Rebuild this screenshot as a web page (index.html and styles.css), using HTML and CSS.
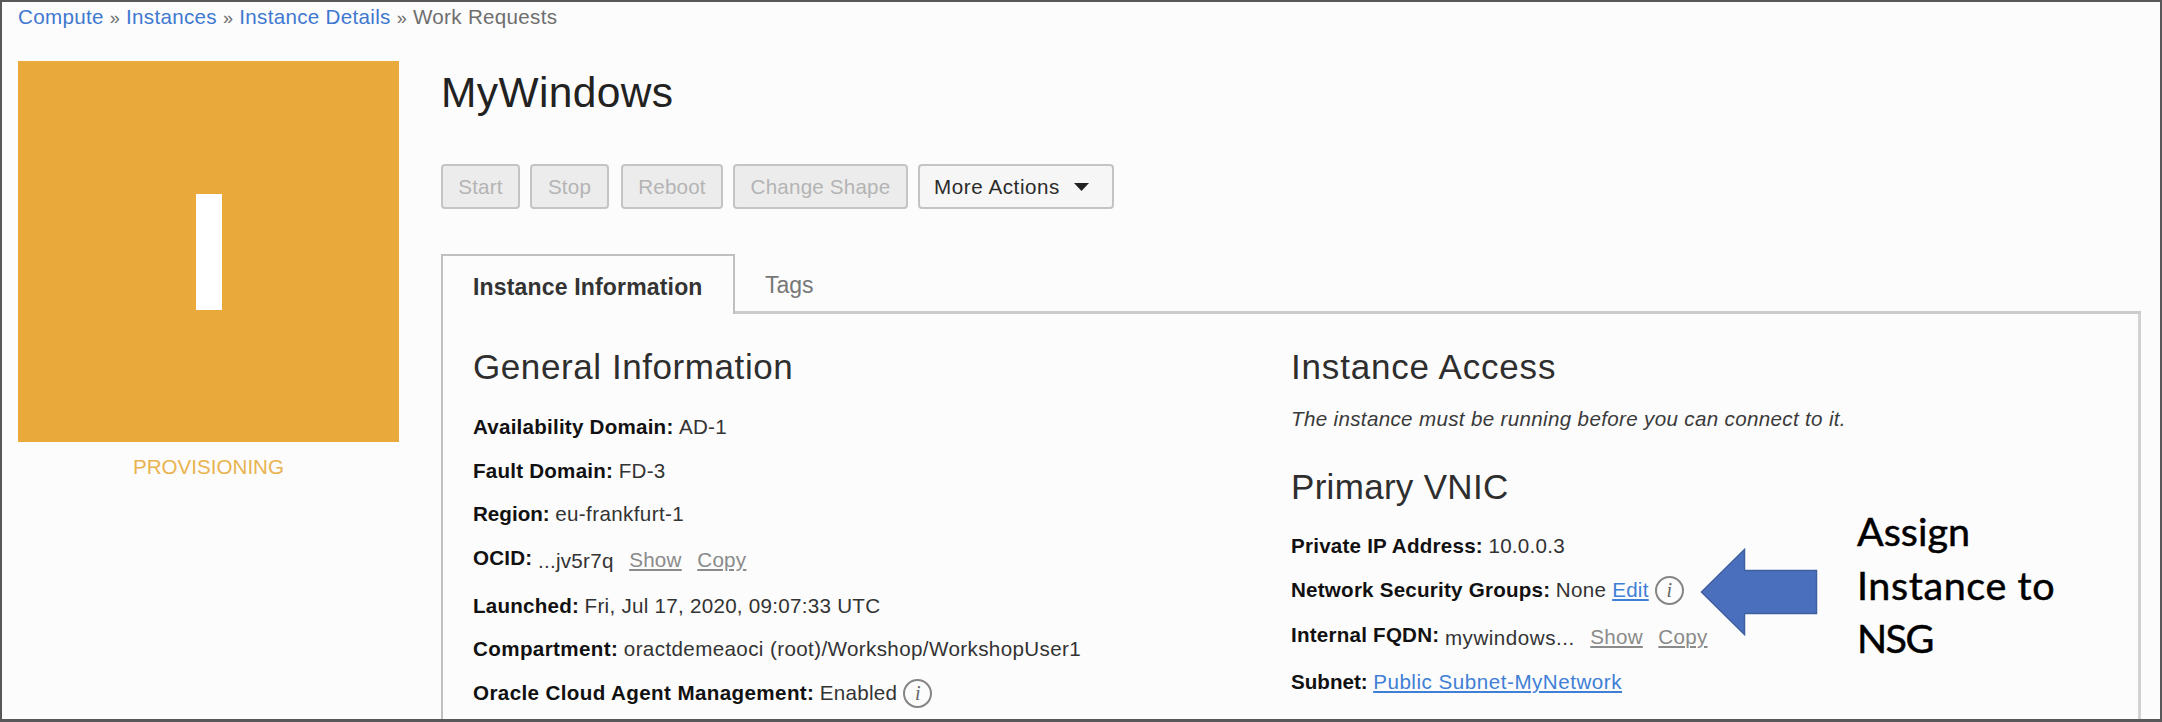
FILE: index.html
```html
<!DOCTYPE html>
<html lang="en">
<head>
<meta charset="utf-8">
<title>MyWindows - Instance Details</title>
<link rel="stylesheet" href="styles.css">
</head>
<body>
<div class="page">
  <nav class="breadcrumb"><a href="#">Compute</a> <span class="sep">»</span> <a href="#">Instances</a> <span class="sep">»</span> <a href="#">Instance Details</a> <span class="sep">»</span> <span>Work Requests</span></nav>
  <div class="layout">
    <aside class="status">
      <div class="tile"><div class="tile-bar"></div></div>
      <div class="status-label">PROVISIONING</div>
    </aside>
    <main class="main">
      <h1 class="title">MyWindows</h1>
      <div class="actions">
        <button class="btn start" disabled>Start</button>
        <button class="btn stop" disabled>Stop</button>
        <button class="btn reboot" disabled>Reboot</button>
        <button class="btn shape" disabled>Change Shape</button>
        <button class="btn more">More Actions<svg class="caret" viewBox="0 0 15 8"><path d="M0 0H15L7.5 8Z"/></svg></button>
      </div>
      <div class="tabs">
        <div class="tab active">Instance Information</div>
        <div class="tab">Tags</div>
      </div>
      <div class="panel">
        <section class="col general">
          <h2>General Information</h2>
          <div class="row"><b>Availability Domain:</b><span>AD-1</span></div>
          <div class="row"><b>Fault Domain:</b><span>FD-3</span></div>
          <div class="row"><b class="snug">Region:</b><span class="roomy">eu-frankfurt-1</span></div>
          <div class="row tall"><b>OCID:</b><span class="low">...jv5r7q</span><a class="mini" href="#">Show</a><a class="mini" href="#">Copy</a></div>
          <div class="row"><b>Launched:</b><span>Fri, Jul 17, 2020, 09:07:33 UTC</span></div>
          <div class="row"><b class="roomy">Compartment:</b><span class="roomy">oractdemeaoci (root)/Workshop/WorkshopUser1</span></div>
          <div class="row"><b class="roomy">Oracle Cloud Agent Management:</b><span>Enabled</span><i class="info">i</i></div>
        </section>
        <section class="col access">
          <h2 class="wide">Instance Access</h2>
          <p class="note">The instance must be running before you can connect to it.</p>
          <h2 class="vnic">Primary VNIC</h2>
          <div class="row"><b>Private IP Address:</b><span>10.0.0.3</span></div>
          <div class="row"><b>Network Security Groups:</b><span>None</span><a class="link" href="#">Edit</a><i class="info">i</i></div>
          <div class="row fqdn"><b>Internal FQDN:</b><span class="low looser">mywindows...</span><a class="mini" href="#">Show</a><a class="mini" href="#">Copy</a></div>
          <div class="row"><b class="snug">Subnet:</b><a class="link looser" href="#">Public Subnet-MyNetwork</a></div>
        </section>
      </div>
    </main>
  </div>
  <svg class="arrow" viewBox="0 0 118 88"><path d="M1.500 44L44.500 1.500V22.500H116.500V65.500H44.500V86.500Z"/></svg>
  <div class="callout"><div>Assign</div><div class="line-wide">Instance to</div><div class="line-narrow">NSG</div></div>
</div>
</body>
</html>
```
FILE: styles.css
```css
* { box-sizing: border-box; }
body { margin: 0; font-family: "Liberation Sans", Arial, sans-serif; font-size: 20.6px; color: #333; }
.page { position: relative; width: 2162px; height: 722px; overflow: hidden; background: #fcfcfc; border: 2px solid #58585a; border-bottom-width: 3px; padding: 0 0 0 16px; }
.breadcrumb { height: 59px; line-height: 30px; letter-spacing: 0.3px; color: #6e6e6e; white-space: nowrap; }
.breadcrumb a { color: #3f78d0; text-decoration: none; }
.sep { font-size: 18px; }
.layout { display: flex; }
.status { width: 381px; flex: none; }
.tile { height: 381px; background: #eaa93b; display: flex; align-items: center; justify-content: center; }
.tile-bar { width: 26px; height: 116px; background: #fff; }
.status-label { margin-top: 13px; line-height: 24px; text-align: center; color: #e9b34f; }
.main { margin-left: 42px; width: 1700px; flex: none; }
.title { margin: 0; height: 103px; line-height: 63px; font-size: 42.5px; font-weight: 400; letter-spacing: 0.38px; color: #222; }
.actions { display: flex; height: 45px; }
.btn { font: inherit; height: 45px; padding: 0; border: 2px solid #c4c4c4; border-radius: 4px; background: #ececec; color: #b4b4b4; letter-spacing: 0.2px; }
.start { width: 79px; margin-right: 10px; }
.stop { width: 79px; margin-right: 12px; }
.reboot { width: 102px; margin-right: 10px; }
.shape { width: 175px; margin-right: 10px; }
.more { display: flex; align-items: center; width: 196px; padding-left: 14px; background: #f6f6f6; color: #2b2b2b; letter-spacing: 0.58px; white-space: nowrap; }
.caret { width: 15px; height: 8px; margin-left: 14px; fill: #222; }
.tabs { display: flex; margin-top: 45px; height: 60px; }
.tab { flex: 1; padding: 0 30px; line-height: 62px; font-size: 23px; color: #777; border-bottom: 3px solid #ccc; }
.tab.active { flex: none; width: 294px; padding: 0 0 0 30px; font-weight: 700; letter-spacing: 0.17px; color: #333; border: 2px solid #c0c0c0; border-bottom: 0; white-space: nowrap; }
.panel { display: flex; height: 420px; border: 3px solid #d2d2d2; border-left: 2px solid #c0c0c0; border-top: 0; padding-left: 30px; }
.col { flex: none; }
.general { width: 818px; }
h2 { margin: 0; height: 91px; line-height: 106px; font-size: 35px; font-weight: 400; letter-spacing: 0.58px; color: #2e2e2e; }
h2.wide { letter-spacing: 0.82px; }
.row { display: flex; height: 43.6px; line-height: 43.6px; letter-spacing: 0.27px; white-space: nowrap; }
.row b { margin-right: 5.5px; color: #111; letter-spacing: 0.22px; }
.row .roomy { letter-spacing: 0.38px; }
.row .looser { letter-spacing: 0.52px; }
.row .snug { letter-spacing: 0; }
.tall { height: 47.8px; }
.fqdn { height: 49px; padding-top: 2px; }
.low { padding-top: 3px; }
.mini { color: #8a8a8a; padding-top: 2px; margin-left: 15.5px; text-decoration: underline; }
.link { color: #3f7fd6; text-decoration: underline; }
span + .link { margin-left: 6px; }
.info { width: 29px; height: 29px; margin: 8px 0 0 6px; border: 2px solid #858585; border-radius: 50%; font: italic 20px/25px "Liberation Serif", serif; letter-spacing: 0; text-align: center; color: #666; }
.note { margin: 0; height: 29px; line-height: 28px; font-style: italic; letter-spacing: 0.33px; color: #3a3a3a; }
h2.vnic { height: 90px; letter-spacing: 0.3px; }
.arrow { position: absolute; left: 1698px; top: 546px; width: 118px; height: 88px; fill: #4a70bd; stroke: #3f5f9f; stroke-width: 1.500; }
.callout { position: absolute; left: 1855px; top: 502px; font: 39.5px/53.7px Lato, Carlito, sans-serif; color: #000; -webkit-text-stroke: 0.5px #000; }
.line-wide { letter-spacing: 0.6px; }
.line-narrow { letter-spacing: -1.6px; }
```
